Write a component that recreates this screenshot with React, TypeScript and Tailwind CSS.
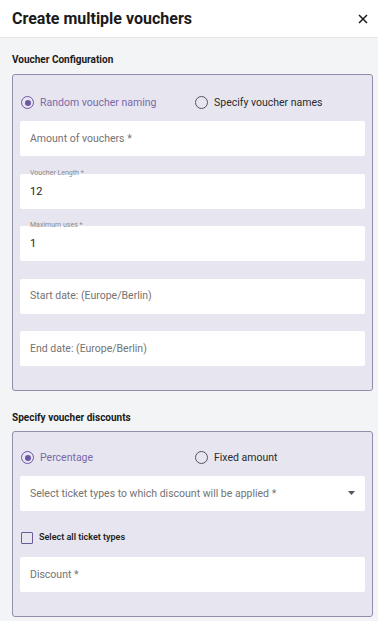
import React from "react";

const font = { fontFamily: 'Roboto, "Noto Sans", sans-serif' };

function Radio({ checked, label }: { checked?: boolean; label: string }) {
  return (
    <div className="flex items-center gap-[6px]">
      <span
        className={`flex h-[13px] w-[13px] items-center justify-center rounded-full border-[1.5px] ${
          checked ? "border-[#6e56a6]" : "border-[#555]"
        }`}
      >
        {checked && <span className="h-[6px] w-[6px] rounded-full bg-[#6e56a6]" />}
      </span>
      <span className={`text-[10.5px] ${checked ? "text-[#7a68a8]" : "text-[#2a2a2a]"}`}>{label}</span>
    </div>
  );
}

function Input({ placeholder, label, value, select }: { placeholder?: string; label?: string; value?: string; select?: boolean }) {
  return (
    <div className="relative flex h-[35px] items-center rounded-[2px] bg-white px-[10px]">
      {label ? (
        <>
          <span className="absolute left-[10px] top-[-4px] text-[7px] leading-none text-[#8a8a8a]">{label}</span>
          <span className="pt-[2px] text-[11px] text-[#222]">{value}</span>
        </>
      ) : (
        <span className="text-[10.5px] text-[#737373]">{placeholder}</span>
      )}
      {select && (
        <svg className="absolute right-[10px] top-[15px]" width="7" height="4" viewBox="0 0 7 4">
          <path d="M0 0 L7 0 L3.5 4 Z" fill="#555" />
        </svg>
      )}
    </div>
  );
}

export default function App() {
  return (
    <div className="h-[621px] w-[378px] overflow-hidden bg-[#f3f4f6]" style={font}>
      <div className="flex h-[38px] items-center justify-between border-b border-[#e8e8ec] bg-white pl-[12px] pr-[10px]">
        <h1 className="text-[16px] font-bold text-[#1a1a1a]">Create multiple vouchers</h1>
        <svg width="10" height="10" viewBox="0 0 10 10">
          <path d="M1 1 L9 9 M9 1 L1 9" stroke="#1a1a1a" strokeWidth="1.5" />
        </svg>
      </div>

      <div className="pl-[12px] pr-[5px] pt-[14px]">
        <div className="text-[10px] font-bold text-[#1a1a1a]">Voucher Configuration</div>
        <div className="mt-[7px] flex h-[317px] flex-col rounded-[3px] border border-[#938dab] bg-[#e7e6f0] px-[7px] pt-[20px]">
          <div className="flex h-[16px]">
            <div className="w-[175px] pl-[1px]"><Radio checked label="Random voucher naming" /></div>
            <div><Radio label="Specify voucher names" /></div>
          </div>
          <div className="mt-[10px] flex flex-col gap-[17.5px]">
            <Input placeholder="Amount of vouchers *" />
            <Input label="Voucher Length *" value="12" />
            <Input label="Maximum uses *" value="1" />
            <Input placeholder="Start date: (Europe/Berlin)" />
            <Input placeholder="End date: (Europe/Berlin)" />
          </div>
        </div>

        <div className="mt-[19px] text-[10px] font-bold text-[#1a1a1a]">Specify voucher discounts</div>
        <div className="mt-[6px] flex h-[186px] flex-col rounded-[3px] border border-[#938dab] bg-[#e7e6f0] px-[7px] pt-[18px]">
          <div className="flex h-[16px]">
            <div className="w-[175px] pl-[1px]"><Radio checked label="Percentage" /></div>
            <div><Radio label="Fixed amount" /></div>
          </div>
          <div className="mt-[10px]">
            <Input placeholder="Select ticket types to which discount will be applied *" select />
          </div>
          <div className="mt-[20px] flex h-[14px] items-center gap-[6px] pl-[1px]">
            <span className="h-[12px] w-[12px] rounded-[1px] border-[1.5px] border-[#6e5a9a]" />
            <span className="text-[9px] font-semibold text-[#222]">Select all ticket types</span>
          </div>
          <div className="mt-[12px]">
            <Input placeholder="Discount *" />
          </div>
        </div>
      </div>
    </div>
  );
}
